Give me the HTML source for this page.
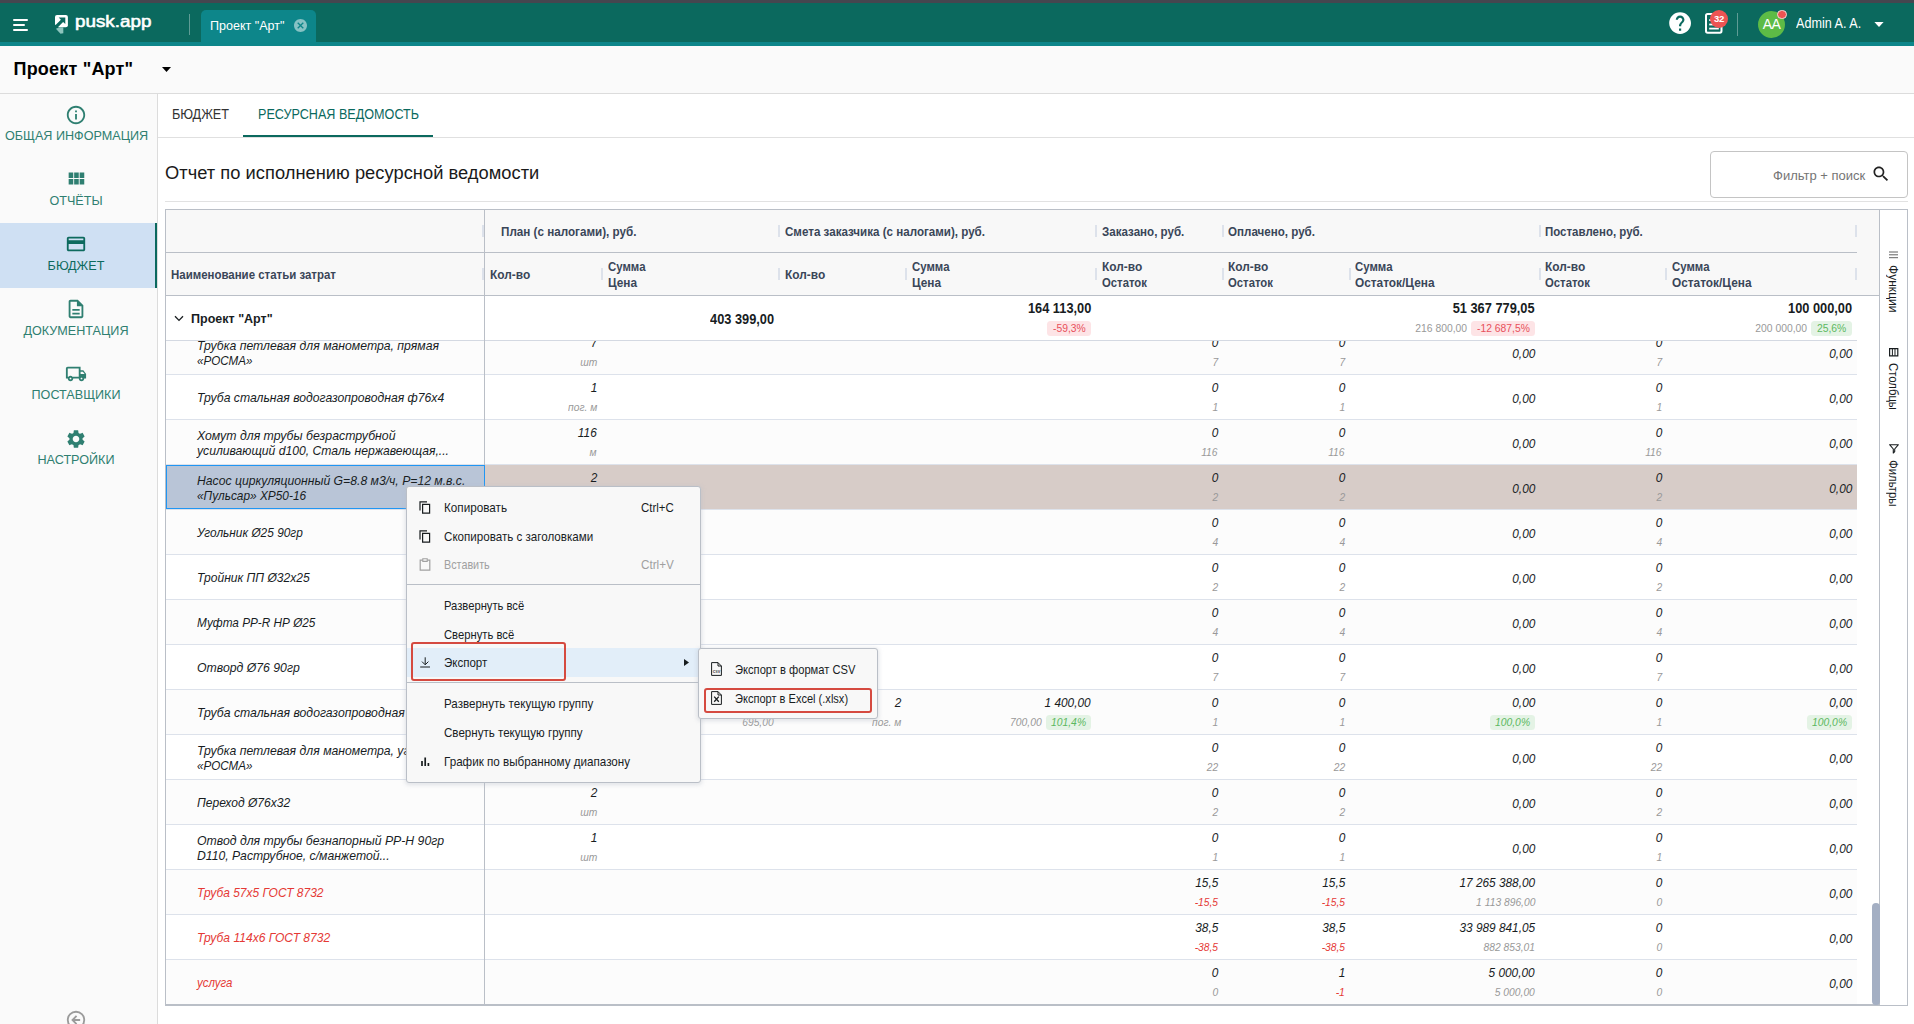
<!DOCTYPE html><html><head><meta charset="utf-8"><title>pusk.app</title><style>
*{box-sizing:border-box;margin:0;padding:0}
html,body{width:1914px;height:1024px;overflow:hidden;background:#fafafa;font-family:"Liberation Sans",sans-serif;color:#181d1f}
.a{position:absolute}
.t{position:absolute;white-space:nowrap;line-height:1}
svg{position:absolute;overflow:visible}
#topdark{left:0;top:0;width:1914px;height:3px;background:#45464f}
#topbar{left:0;top:3px;width:1914px;height:39px;background:#0b695e}
#topteal{left:0;top:42px;width:1914px;height:4px;background:#0d868a}
#tab{left:201px;top:10px;width:115px;height:33px;background:#0d868a;border-radius:5px 5px 0 0}
#titleline{left:0;top:93px;width:1914px;height:1px;background:#dcdcdc}
#sideline{left:157px;top:94px;width:1px;height:930px;background:#dcdcdc}
.sb{position:absolute;left:0;width:152px;text-align:center;font-size:13.5px;color:#2f7f71;line-height:1;white-space:nowrap;transform:scaleX(.934);transform-origin:50% 50%}
.hd{position:absolute;white-space:nowrap;font-weight:bold;font-size:13px;color:#3a4658;line-height:16px;transform:scaleX(.89);transform-origin:0 50%}
.sep{position:absolute;width:2px;height:12px;background:#dde2eb}
.row{position:absolute;left:166px;width:1691px;height:45px;border-bottom:1px solid #dde2eb;background:#fff}
.row.o{background:#fcfcfc}
.row.sel{background:#d7ccc8}
.c{position:absolute;white-space:nowrap;font-style:italic;font-size:13px;line-height:1;color:#181d1f;text-align:right;transform:scaleX(.91);transform-origin:100% 50%}
.g{position:absolute;white-space:nowrap;font-style:italic;font-size:11px;line-height:1;color:#999;text-align:right;transform:scaleX(.935);transform-origin:100% 50%}
.n{position:absolute;left:197px;white-space:nowrap;font-style:italic;font-size:13px;line-height:15px;color:#181d1f;transform:scaleX(.94);transform-origin:0 50%}
.red{color:#e53935}
.bdg{display:inline-block;padding:2px 5.4px;border-radius:3.5px;font-size:11px;line-height:11px;margin-left:4.3px;vertical-align:middle}
.bg{background:#e4f3e5;color:#4caf50}
.br{background:#fde4e6;color:#e25563}
.mi{position:absolute;white-space:nowrap;font-size:13px;line-height:1;color:#181d1f;transform:scaleX(.896);transform-origin:0 50%}
</style></head><body>
<div class="a" id="topdark"></div><div class="a" id="topbar"></div><div class="a" id="topteal"></div>
<div class="a" style="left:13px;top:18.5px;width:15px;height:2px;background:#fff;border-radius:1px"></div>
<div class="a" style="left:13px;top:23.5px;width:12px;height:2px;background:#fff;border-radius:1px"></div>
<div class="a" style="left:13px;top:28.5px;width:15px;height:2px;background:#fff;border-radius:1px"></div>
<svg style="left:55.1px;top:15.2px" width="13" height="19" viewBox="0 0 13 19">
<path d="M2 0H10.9a2 2 0 0 1 2 2V10.2a2 2 0 0 1-2 2H3.4L0 9.6V2a2 2 0 0 1 2-2z" fill="#fff"/>
<path d="M0.9 13.8L4.5 12.25H8.3V18.2L5.5 18.7z" fill="#8cc4bd"/>
<path d="M3.7 2.5H10.3V9.1L8.1 6.9 1.9 13.2 -0.4 10.9 5.9 4.7z" fill="#0b695e"/>
</svg>
<div class="t" style="left:75px;top:13.9px;font-size:15.6px;color:#fff;-webkit-text-stroke:0.55px #fff;transform:scaleX(1.2067);transform-origin:0 50%">pusk.app</div>
<div class="a" style="left:189px;top:14px;width:1px;height:21px;background:#5f9c95"></div>
<div class="a" id="tab"></div>
<div class="t" style="left:210px;top:18.5px;font-size:13.5px;color:#fff;transform:scaleX(.929);transform-origin:0 50%">Проект "Арт"</div>
<svg style="left:294px;top:19.2px" width="13" height="13" viewBox="2 2 20 20" ><path d="M12 2C6.47 2 2 6.47 2 12s4.47 10 10 10 10-4.47 10-10S17.53 2 12 2zm5 13.59L15.59 17 12 13.41 8.41 17 7 15.59 10.59 12 7 8.41 8.41 7 12 10.59 15.59 7 17 8.41 13.41 12 17 15.59z" fill="#86c2c4"/></svg>
<svg style="left:1667px;top:10.4px" width="26.2" height="26.2" viewBox="0 0 24 24" ><path d="M12 2C6.48 2 2 6.48 2 12s4.48 10 10 10 10-4.48 10-10S17.52 2 12 2zm1 17h-2v-2h2v2zm2.07-7.75l-.9.92C13.45 12.9 13 13.5 13 15h-2v-.5c0-1.1.45-2.1 1.17-2.83l1.24-1.26c.37-.36.59-.86.59-1.41 0-1.1-.9-2-2-2s-2 .9-2 2H8c0-2.21 1.79-4 4-4s4 1.79 4 4c0 .88-.36 1.68-.93 2.25z" fill="#fff"/></svg>
<svg style="left:1704.8px;top:13.2px" width="17.5" height="20.7" viewBox="0 0 17.5 20.7">
<rect x="1" y="1" width="15.5" height="18.7" rx="1.6" fill="none" stroke="#fff" stroke-width="2"/>
<rect x="4.2" y="6.2" width="9.6" height="1.8" fill="#fff"/><rect x="4.2" y="10.6" width="9.6" height="1.8" fill="#fff"/><rect x="4.2" y="14.7" width="9.6" height="1.8" fill="#fff"/>
</svg>
<div class="a" style="left:1710px;top:9.8px;width:18px;height:18px;border-radius:50%;background:#ec5453"></div>
<div class="t" style="left:1710px;top:14px;width:18px;text-align:center;font-size:9.5px;font-weight:bold;color:#fff;letter-spacing:-0.3px">32</div>
<div class="a" style="left:1737px;top:13px;width:1px;height:23px;background:#5f9c95"></div>
<div class="a" style="left:1758px;top:10.5px;width:27px;height:27px;border-radius:50%;background:#5dbb46"></div>
<div class="t" style="left:1758px;top:17px;width:27px;text-align:center;font-size:14px;color:#fff;letter-spacing:-0.5px">AA</div>
<div class="a" style="left:1777px;top:9.6px;width:9.6px;height:9.6px;border-radius:50%;background:#ec5453;border:1px solid #f4d9d6"></div>
<div class="t" style="left:1796px;top:16.1px;font-size:14px;color:#fff;transform:scaleX(.9);transform-origin:0 50%">Admin A. A.</div>
<svg style="left:1874.3px;top:21.8px" width="10" height="5.1" viewBox="0 0 10 5.5"><path d="M0 0h10L5 5.5z" fill="#fff"/></svg>
<div class="t" style="left:13.5px;top:59.5px;font-size:18px;font-weight:bold;color:#000;letter-spacing:0.2px">Проект "Арт"</div>
<svg style="left:161.5px;top:67.3px" width="9" height="5" viewBox="0 0 9 5"><path d="M0 0h9L4.5 5z" fill="#000"/></svg>
<div class="a" id="titleline"></div><div class="a" id="sideline"></div>
<div class="a" style="left:0;top:223px;width:157px;height:65px;background:#cfe0f3"></div>
<div class="a" style="left:155px;top:223px;width:2px;height:65px;background:#0b695e"></div>
<svg style="left:65px;top:104px" width="22" height="22" viewBox="0 0 24 24" ><path d="M11 17h2v-6h-2v6zm1-15C6.48 2 2 6.48 2 12s4.48 10 10 10 10-4.48 10-10S17.52 2 12 2zm0 18c-4.41 0-8-3.59-8-8s3.59-8 8-8 8 3.59 8 8-3.59 8-8 8zM11 9h2V7h-2v2z" fill="#2f7f71"/></svg>
<svg style="left:65px;top:168px" width="22" height="22" viewBox="0 0 24 24" ><path d="M4 11h5V5H4v6zm0 7h5v-6H4v6zm6 0h5v-6h-5v6zm6 0h5v-6h-5v6zm-6-7h5V5h-5v6zm6-6v6h5V5h-5z" fill="#2f7f71"/></svg>
<svg style="left:65px;top:233px" width="22" height="22" viewBox="0 0 24 24" ><path d="M20 4H4c-1.11 0-1.99.89-1.99 2L2 18c0 1.11.89 2 2 2h16c1.11 0 2-.89 2-2V6c0-1.11-.89-2-2-2zm0 14H4v-6h16v6zm0-10H4V6h16v2z" fill="#0d6a5e"/></svg>
<svg style="left:65px;top:298px" width="22" height="22" viewBox="0 0 24 24" ><path d="M8 16h8v2H8zm0-4h8v2H8zm6-10H6c-1.1 0-2 .9-2 2v16c0 1.1.89 2 1.99 2H18c1.1 0 2-.9 2-2V8l-6-6zm4 18H6V4h7v5h5v11z" fill="#2f7f71"/></svg>
<svg style="left:65px;top:363px" width="22" height="22" viewBox="0 0 24 24" ><path d="M20 8h-3V4H3c-1.1 0-2 .9-2 2v11h2c0 1.66 1.34 3 3 3s3-1.34 3-3h6c0 1.66 1.34 3 3 3s3-1.34 3-3h2v-5l-3-4zm-.5 1.5l1.96 2.5H17V9.5h2.5zM6 18c-.55 0-1-.45-1-1s.45-1 1-1 1 .45 1 1-.45 1-1 1zm2.22-3c-.55-.61-1.33-1-2.22-1s-1.67.39-2.22 1H3V6h12v9H8.22zM18 18c-.55 0-1-.45-1-1s.45-1 1-1 1 .45 1 1-.45 1-1 1z" fill="#2f7f71"/></svg>
<svg style="left:65px;top:427.7px" width="22" height="22" viewBox="0 0 24 24" ><path d="M19.14 12.94c.04-.3.06-.61.06-.94 0-.32-.02-.64-.07-.94l2.03-1.58c.18-.14.23-.41.12-.61l-1.92-3.32c-.12-.22-.37-.29-.59-.22l-2.39.96c-.5-.38-1.03-.7-1.62-.94l-.36-2.54c-.04-.24-.24-.41-.48-.41h-3.84c-.24 0-.43.17-.47.41l-.36 2.54c-.59.24-1.13.57-1.62.94l-2.39-.96c-.22-.08-.47 0-.59.22L2.74 8.87c-.12.21-.08.47.12.61l2.03 1.58c-.05.3-.09.63-.09.94s.02.64.07.94l-2.03 1.58c-.18.14-.23.41-.12.61l1.92 3.32c.12.22.37.29.59.22l2.39-.96c.5.38 1.03.7 1.62.94l.36 2.54c.05.24.24.41.48.41h3.84c.24 0 .44-.17.47-.41l.36-2.54c.59-.24 1.13-.56 1.62-.94l2.39.96c.22.08.47 0 .59-.22l1.92-3.32c.12-.22.07-.47-.12-.61l-2.01-1.58zM12 15.6c-1.98 0-3.6-1.62-3.6-3.6s1.62-3.6 3.6-3.6 3.6 1.62 3.6 3.6-1.62 3.6-3.6 3.6z" fill="#2f7f71"/></svg>
<div class="sb" style="top:128.8px">ОБЩАЯ ИНФОРМАЦИЯ</div>
<div class="sb" style="top:193.8px">ОТЧЁТЫ</div>
<div class="sb" style="top:258.8px;color:#0d6a5e">БЮДЖЕТ</div>
<div class="sb" style="top:323.8px">ДОКУМЕНТАЦИЯ</div>
<div class="sb" style="top:387.8px">ПОСТАВЩИКИ</div>
<div class="sb" style="top:452.8px">НАСТРОЙКИ</div>
<svg style="left:65px;top:1009.2px" width="22" height="22" viewBox="0 0 24 24"><circle cx="12" cy="12" r="9" fill="none" stroke="#9b9b9b" stroke-width="2"/><path d="M12.6 7.6L8.2 12l4.4 4.4M8.2 12h8.3" stroke="#9b9b9b" stroke-width="2" fill="none"/></svg>
<div class="a" style="left:158px;top:94px;width:1756px;height:930px;background:#fff"></div>
<div class="t" style="left:172px;top:106.8px;font-size:14px;color:#333;transform:scaleX(.905);transform-origin:0 50%">БЮДЖЕТ</div>
<div class="t" style="left:258px;top:106.8px;font-size:14px;color:#0b695e;transform:scaleX(.9);transform-origin:0 50%">РЕСУРСНАЯ ВЕДОМОСТЬ</div>
<div class="a" style="left:158px;top:137px;width:1756px;height:1px;background:#e0e0e0"></div>
<div class="a" style="left:243px;top:134.5px;width:190px;height:2.5px;background:#0b695e"></div>
<div class="t" style="left:165px;top:164px;font-size:18.3px;color:#1a1a1a;letter-spacing:0.03px">Отчет по исполнению ресурсной ведомости</div>
<div class="a" style="left:1710px;top:151px;width:198px;height:47px;border:1px solid #c4c4c4;border-radius:4px;background:#fff"></div>
<div class="t" style="left:1773px;top:168.5px;font-size:13px;color:#757575">Фильтр + поиск</div>
<svg style="left:1870.5px;top:163.5px" width="20" height="20" viewBox="0 0 24 24" ><path d="M15.5 14h-.79l-.28-.27C15.41 12.59 16 11.11 16 9.5 16 5.91 13.09 3 9.5 3S3 5.91 3 9.5 5.91 16 9.5 16c1.61 0 3.09-.59 4.23-1.57l.27.28v.79l5 4.99L20.49 19l-4.99-5zm-6 0C7.01 14 5 11.99 5 9.5S7.01 5 9.5 5 14 7.01 14 9.5 11.99 14 9.5 14z" fill="#222"/></svg>
<div class="a" style="left:165px;top:201px;width:1743px;height:1px;background:#e2e2e2"></div>
<div class="a" style="left:165px;top:209px;width:1743px;height:797px;border:1px solid #babfc7;background:#fff"></div>
<div class="a" style="left:166px;top:210px;width:1713px;height:86px;background:#f8f8f8;border-bottom:1px solid #babfc7"></div>
<div class="a" style="left:166px;top:252px;width:1691px;height:1px;background:#babfc7"></div>
<div class="a" style="left:1879px;top:210px;width:1px;height:795px;background:#babfc7"></div>
<div class="hd" style="left:501px;top:223.6px;transform:scaleX(0.8972)">План (с налогами), руб.</div>
<div class="hd" style="left:785px;top:223.6px;transform:scaleX(0.8918)">Смета заказчика (с налогами), руб.</div>
<div class="hd" style="left:1101.5px;top:223.6px;transform:scaleX(0.8902)">Заказано, руб.</div>
<div class="hd" style="left:1228px;top:223.6px;transform:scaleX(0.8917)">Оплачено, руб.</div>
<div class="hd" style="left:1545px;top:223.6px;transform:scaleX(0.8832)">Поставлено, руб.</div>
<div class="hd" style="left:171px;top:267px;transform:scaleX(0.8809)">Наименование статьи затрат</div>
<div class="hd" style="left:490px;top:267px;transform:scaleX(0.9157)">Кол-во</div>
<div class="hd" style="left:607.5px;top:259px;transform:scaleX(0.8774)">Сумма</div>
<div class="hd" style="left:607.5px;top:275px;transform:scaleX(0.9103)">Цена</div>
<div class="hd" style="left:784.7px;top:267px;transform:scaleX(0.9157)">Кол-во</div>
<div class="hd" style="left:911.5px;top:259px;transform:scaleX(0.8774)">Сумма</div>
<div class="hd" style="left:911.5px;top:275px;transform:scaleX(0.9103)">Цена</div>
<div class="hd" style="left:1101.5px;top:259px;transform:scaleX(0.9157)">Кол-во</div>
<div class="hd" style="left:1101.5px;top:275px;transform:scaleX(0.8705)">Остаток</div>
<div class="hd" style="left:1228px;top:259px;transform:scaleX(0.9157)">Кол-во</div>
<div class="hd" style="left:1228px;top:275px;transform:scaleX(0.8705)">Остаток</div>
<div class="hd" style="left:1355px;top:259px;transform:scaleX(0.8774)">Сумма</div>
<div class="hd" style="left:1355px;top:275px;transform:scaleX(0.9121)">Остаток/Цена</div>
<div class="hd" style="left:1545px;top:259px;transform:scaleX(0.9157)">Кол-во</div>
<div class="hd" style="left:1545px;top:275px;transform:scaleX(0.8705)">Остаток</div>
<div class="hd" style="left:1672px;top:259px;transform:scaleX(0.8774)">Сумма</div>
<div class="hd" style="left:1672px;top:275px;transform:scaleX(0.9121)">Остаток/Цена</div>
<div class="sep" style="left:482px;top:225px"></div>
<div class="sep" style="left:777.5px;top:225px"></div>
<div class="sep" style="left:1095px;top:225px"></div>
<div class="sep" style="left:1222px;top:225px"></div>
<div class="sep" style="left:1538.5px;top:225px"></div>
<div class="sep" style="left:1855px;top:225px"></div>
<div class="sep" style="left:482px;top:268px"></div>
<div class="sep" style="left:601px;top:268px"></div>
<div class="sep" style="left:777.5px;top:268px"></div>
<div class="sep" style="left:905px;top:268px"></div>
<div class="sep" style="left:1095px;top:268px"></div>
<div class="sep" style="left:1222px;top:268px"></div>
<div class="sep" style="left:1348.5px;top:268px"></div>
<div class="sep" style="left:1538.5px;top:268px"></div>
<div class="sep" style="left:1665px;top:268px"></div>
<div class="sep" style="left:1855px;top:268px"></div>
<div class="row o" style="top:330px"></div>
<div class="n" style="top:337.8px;transform:scaleX(0.9407)">Трубка петлевая для манометра, прямая</div>
<div class="n" style="top:352.8px;transform:scaleX(0.8954)">«РОСМА»</div>
<div class="c" style="right:1317px;top:335.95px">7</div>
<div class="g" style="right:1317px;top:356.63px">шт</div>
<div class="c" style="right:696px;top:335.95px">0</div>
<div class="g" style="right:696px;top:356.63px">7</div>
<div class="c" style="right:569px;top:335.95px">0</div>
<div class="g" style="right:569px;top:356.63px">7</div>
<div class="c" style="right:252px;top:335.95px">0</div>
<div class="g" style="right:252px;top:356.63px">7</div>
<div class="c" style="right:379px;top:346.65px">0,00</div>
<div class="c" style="right:62px;top:346.65px">0,00</div>
<div class="row" style="top:375px"></div>
<div class="n" style="top:390.3px;transform:scaleX(0.9377)">Труба стальная водогазопроводная ф76х4</div>
<div class="c" style="right:1317px;top:380.95px">1</div>
<div class="g" style="right:1317px;top:401.63px">пог. м</div>
<div class="c" style="right:696px;top:380.95px">0</div>
<div class="g" style="right:696px;top:401.63px">1</div>
<div class="c" style="right:569px;top:380.95px">0</div>
<div class="g" style="right:569px;top:401.63px">1</div>
<div class="c" style="right:252px;top:380.95px">0</div>
<div class="g" style="right:252px;top:401.63px">1</div>
<div class="c" style="right:379px;top:391.65px">0,00</div>
<div class="c" style="right:62px;top:391.65px">0,00</div>
<div class="row o" style="top:420px"></div>
<div class="n" style="top:427.8px;transform:scaleX(0.9464)">Хомут для трубы безраструбной</div>
<div class="n" style="top:442.8px;transform:scaleX(0.9351)">усиливающий d100, Сталь нержавеющая,...</div>
<div class="c" style="right:1317px;top:425.95px">116</div>
<div class="g" style="right:1317px;top:446.63px">м</div>
<div class="c" style="right:696px;top:425.95px">0</div>
<div class="g" style="right:696px;top:446.63px">116</div>
<div class="c" style="right:569px;top:425.95px">0</div>
<div class="g" style="right:569px;top:446.63px">116</div>
<div class="c" style="right:252px;top:425.95px">0</div>
<div class="g" style="right:252px;top:446.63px">116</div>
<div class="c" style="right:379px;top:436.65px">0,00</div>
<div class="c" style="right:62px;top:436.65px">0,00</div>
<div class="row sel" style="top:465px"></div>
<div class="a" style="left:166px;top:465px;width:319px;height:44px;background:#b9c5d7;border:1px solid #2196f3;z-index:2"></div>
<div class="n" style="top:472.8px;transform:scaleX(0.9375);z-index:3">Насос циркуляционный G=8.8 м3/ч, P=12 м.в.с.</div>
<div class="n" style="top:487.8px;transform:scaleX(0.9125);z-index:3">«Пульсар» XP50-16</div>
<div class="c" style="right:1317px;top:470.95px">2</div>
<div class="g" style="right:1317px;top:491.63px">шт</div>
<div class="c" style="right:696px;top:470.95px">0</div>
<div class="g" style="right:696px;top:491.63px">2</div>
<div class="c" style="right:569px;top:470.95px">0</div>
<div class="g" style="right:569px;top:491.63px">2</div>
<div class="c" style="right:252px;top:470.95px">0</div>
<div class="g" style="right:252px;top:491.63px">2</div>
<div class="c" style="right:379px;top:481.65px">0,00</div>
<div class="c" style="right:62px;top:481.65px">0,00</div>
<div class="row o" style="top:510px"></div>
<div class="n" style="top:525.3px;transform:scaleX(0.9135)">Угольник Ø25 90гр</div>
<div class="c" style="right:1317px;top:515.95px">4</div>
<div class="g" style="right:1317px;top:536.63px">шт</div>
<div class="c" style="right:696px;top:515.95px">0</div>
<div class="g" style="right:696px;top:536.63px">4</div>
<div class="c" style="right:569px;top:515.95px">0</div>
<div class="g" style="right:569px;top:536.63px">4</div>
<div class="c" style="right:252px;top:515.95px">0</div>
<div class="g" style="right:252px;top:536.63px">4</div>
<div class="c" style="right:379px;top:526.65px">0,00</div>
<div class="c" style="right:62px;top:526.65px">0,00</div>
<div class="row" style="top:555px"></div>
<div class="n" style="top:570.3px;transform:scaleX(0.9298)">Тройник ПП Ø32х25</div>
<div class="c" style="right:1317px;top:560.95px">2</div>
<div class="g" style="right:1317px;top:581.63px">шт</div>
<div class="c" style="right:696px;top:560.95px">0</div>
<div class="g" style="right:696px;top:581.63px">2</div>
<div class="c" style="right:569px;top:560.95px">0</div>
<div class="g" style="right:569px;top:581.63px">2</div>
<div class="c" style="right:252px;top:560.95px">0</div>
<div class="g" style="right:252px;top:581.63px">2</div>
<div class="c" style="right:379px;top:571.65px">0,00</div>
<div class="c" style="right:62px;top:571.65px">0,00</div>
<div class="row o" style="top:600px"></div>
<div class="n" style="top:615.3px;transform:scaleX(0.9054)">Муфта PP-R НР Ø25</div>
<div class="c" style="right:1317px;top:605.95px">4</div>
<div class="g" style="right:1317px;top:626.63px">шт</div>
<div class="c" style="right:696px;top:605.95px">0</div>
<div class="g" style="right:696px;top:626.63px">4</div>
<div class="c" style="right:569px;top:605.95px">0</div>
<div class="g" style="right:569px;top:626.63px">4</div>
<div class="c" style="right:252px;top:605.95px">0</div>
<div class="g" style="right:252px;top:626.63px">4</div>
<div class="c" style="right:379px;top:616.65px">0,00</div>
<div class="c" style="right:62px;top:616.65px">0,00</div>
<div class="row" style="top:645px"></div>
<div class="n" style="top:660.3px;transform:scaleX(0.9433)">Отворд Ø76 90гр</div>
<div class="c" style="right:1317px;top:650.95px">7</div>
<div class="g" style="right:1317px;top:671.63px">шт</div>
<div class="c" style="right:696px;top:650.95px">0</div>
<div class="g" style="right:696px;top:671.63px">7</div>
<div class="c" style="right:569px;top:650.95px">0</div>
<div class="g" style="right:569px;top:671.63px">7</div>
<div class="c" style="right:252px;top:650.95px">0</div>
<div class="g" style="right:252px;top:671.63px">7</div>
<div class="c" style="right:379px;top:661.65px">0,00</div>
<div class="c" style="right:62px;top:661.65px">0,00</div>
<div class="row o" style="top:690px"></div>
<div class="n" style="top:705.3px;transform:scaleX(0.94)">Труба стальная водогазопроводная ф57х3,5</div>
<div class="c" style="right:1317px;top:695.95px">1</div>
<div class="g" style="right:1317px;top:716.63px">пог. м</div>
<div class="c" style="right:696px;top:695.95px">0</div>
<div class="g" style="right:696px;top:716.63px">1</div>
<div class="c" style="right:569px;top:695.95px">0</div>
<div class="g" style="right:569px;top:716.63px">1</div>
<div class="c" style="right:252px;top:695.95px">0</div>
<div class="g" style="right:252px;top:716.63px">1</div>
<div class="g" style="right:1140px;top:716.63px">695,00</div>
<div class="c" style="right:1013px;top:695.95px">2</div>
<div class="g" style="right:1013px;top:716.63px">пог. м</div>
<div class="c" style="right:823px;top:695.95px">1 400,00</div>
<div class="a" style="left:1045.93px;top:715px;width:45.07px;height:15px;border-radius:3.5px;background:#e4f3e5"></div>
<div class="t" style="left:1051.03px;top:717.03px;font-size:11px;font-style:italic;color:#5cb860;transform:scaleX(0.94);transform-origin:0 50%">101,4%</div>
<div class="t" style="right:872.07px;top:717.03px;font-size:11px;font-style:italic;color:#999;transform:scaleX(0.94);transform-origin:100% 50%">700,00</div>
<div class="c" style="right:379px;top:695.95px">0,00</div>
<div class="a" style="left:1489.93px;top:715px;width:45.07px;height:15px;border-radius:3.5px;background:#e4f3e5"></div>
<div class="t" style="left:1495.03px;top:717.03px;font-size:11px;font-style:italic;color:#5cb860;transform:scaleX(0.94);transform-origin:0 50%">100,0%</div>
<div class="c" style="right:62px;top:695.95px">0,00</div>
<div class="a" style="left:1806.93px;top:715px;width:45.07px;height:15px;border-radius:3.5px;background:#e4f3e5"></div>
<div class="t" style="left:1812.03px;top:717.03px;font-size:11px;font-style:italic;color:#5cb860;transform:scaleX(0.94);transform-origin:0 50%">100,0%</div>
<div class="row" style="top:735px"></div>
<div class="n" style="top:742.8px;transform:scaleX(0.9407)">Трубка петлевая для манометра, угловая</div>
<div class="n" style="top:757.8px;transform:scaleX(0.8954)">«РОСМА»</div>
<div class="c" style="right:1317px;top:740.95px">22</div>
<div class="g" style="right:1317px;top:761.63px">шт</div>
<div class="c" style="right:696px;top:740.95px">0</div>
<div class="g" style="right:696px;top:761.63px">22</div>
<div class="c" style="right:569px;top:740.95px">0</div>
<div class="g" style="right:569px;top:761.63px">22</div>
<div class="c" style="right:252px;top:740.95px">0</div>
<div class="g" style="right:252px;top:761.63px">22</div>
<div class="c" style="right:379px;top:751.65px">0,00</div>
<div class="c" style="right:62px;top:751.65px">0,00</div>
<div class="row o" style="top:780px"></div>
<div class="n" style="top:795.3px;transform:scaleX(0.9278)">Переход Ø76х32</div>
<div class="c" style="right:1317px;top:785.95px">2</div>
<div class="g" style="right:1317px;top:806.63px">шт</div>
<div class="c" style="right:696px;top:785.95px">0</div>
<div class="g" style="right:696px;top:806.63px">2</div>
<div class="c" style="right:569px;top:785.95px">0</div>
<div class="g" style="right:569px;top:806.63px">2</div>
<div class="c" style="right:252px;top:785.95px">0</div>
<div class="g" style="right:252px;top:806.63px">2</div>
<div class="c" style="right:379px;top:796.65px">0,00</div>
<div class="c" style="right:62px;top:796.65px">0,00</div>
<div class="row" style="top:825px"></div>
<div class="n" style="top:832.8px;transform:scaleX(0.9434)">Отвод для трубы безнапорный PP-H 90гр</div>
<div class="n" style="top:847.8px;transform:scaleX(0.9369)">D110, Раструбное, с/манжетой...</div>
<div class="c" style="right:1317px;top:830.95px">1</div>
<div class="g" style="right:1317px;top:851.63px">шт</div>
<div class="c" style="right:696px;top:830.95px">0</div>
<div class="g" style="right:696px;top:851.63px">1</div>
<div class="c" style="right:569px;top:830.95px">0</div>
<div class="g" style="right:569px;top:851.63px">1</div>
<div class="c" style="right:252px;top:830.95px">0</div>
<div class="g" style="right:252px;top:851.63px">1</div>
<div class="c" style="right:379px;top:841.65px">0,00</div>
<div class="c" style="right:62px;top:841.65px">0,00</div>
<div class="row o" style="top:870px"></div>
<div class="n red" style="top:885.3px;transform:scaleX(0.9218)">Труба 57х5 ГОСТ 8732</div>
<div class="c" style="right:696px;top:875.95px">15,5</div>
<div class="g red" style="right:696px;top:896.63px">-15,5</div>
<div class="c" style="right:569px;top:875.95px">15,5</div>
<div class="g red" style="right:569px;top:896.63px">-15,5</div>
<div class="c" style="right:379px;top:875.95px">17 265 388,00</div>
<div class="g" style="right:379px;top:896.63px">1 113 896,00</div>
<div class="c" style="right:252px;top:875.95px">0</div>
<div class="g" style="right:252px;top:896.63px">0</div>
<div class="c" style="right:62px;top:886.65px">0,00</div>
<div class="row" style="top:915px"></div>
<div class="n red" style="top:930.3px;transform:scaleX(0.9282)">Труба 114х6 ГОСТ 8732</div>
<div class="c" style="right:696px;top:920.95px">38,5</div>
<div class="g red" style="right:696px;top:941.63px">-38,5</div>
<div class="c" style="right:569px;top:920.95px">38,5</div>
<div class="g red" style="right:569px;top:941.63px">-38,5</div>
<div class="c" style="right:379px;top:920.95px">33 989 841,05</div>
<div class="g" style="right:379px;top:941.63px">882 853,01</div>
<div class="c" style="right:252px;top:920.95px">0</div>
<div class="g" style="right:252px;top:941.63px">0</div>
<div class="c" style="right:62px;top:931.65px">0,00</div>
<div class="row o" style="top:960px"></div>
<div class="n red" style="top:975.3px;transform:scaleX(0.881)">услуга</div>
<div class="c" style="right:696px;top:965.95px">0</div>
<div class="g" style="right:696px;top:986.63px">0</div>
<div class="c" style="right:569px;top:965.95px">1</div>
<div class="g red" style="right:569px;top:986.63px">-1</div>
<div class="c" style="right:379px;top:965.95px">5 000,00</div>
<div class="g" style="right:379px;top:986.63px">5 000,00</div>
<div class="c" style="right:252px;top:965.95px">0</div>
<div class="g" style="right:252px;top:986.63px">0</div>
<div class="c" style="right:62px;top:976.65px">0,00</div>
<div class="a" style="left:166px;top:296px;width:1691px;height:45px;background:#fff;border-bottom:1px solid #d4d9e2"></div>
<svg style="left:173.5px;top:314.5px" width="10" height="7" viewBox="0 0 10 7"><path d="M1 1.2L5 5.4 9 1.2" fill="none" stroke="#181d1f" stroke-width="1.3"/></svg>
<div class="t" style="left:191px;top:311.5px;font-size:13px;font-weight:bold;color:#181d1f;transform:scaleX(.963);transform-origin:0 50%">Проект "Арт"</div>
<div class="t" style="right:1140px;top:312.16px;font-size:14px;font-weight:bold;color:#181d1f;transform:scaleX(.914);transform-origin:100% 50%">403 399,00</div>
<div class="t" style="right:823px;top:301.16px;font-size:14px;font-weight:bold;color:#181d1f;transform:scaleX(.914);transform-origin:100% 50%">164 113,00</div>
<div class="a" style="left:1046.84px;top:321px;width:44.16px;height:15px;border-radius:3.5px;background:#fde4e6"></div>
<div class="t" style="left:1052.64px;top:323.03px;font-size:11px;color:#e8505b;transform:scaleX(0.94);transform-origin:0 50%">-59,3%</div>
<div class="t" style="right:379px;top:301.16px;font-size:14px;font-weight:bold;color:#181d1f;transform:scaleX(.914);transform-origin:100% 50%">51 367 779,05</div>
<div class="a" style="left:1470.71px;top:321px;width:64.29px;height:15px;border-radius:3.5px;background:#fde4e6"></div>
<div class="t" style="left:1476.51px;top:323.03px;font-size:11px;color:#e8505b;transform:scaleX(0.94);transform-origin:0 50%">-12 687,5%</div>
<div class="t" style="right:447.29px;top:323.03px;font-size:11px;color:#999;transform:scaleX(0.94);transform-origin:100% 50%">216 800,00</div>
<div class="t" style="right:62px;top:301.16px;font-size:14px;font-weight:bold;color:#181d1f;transform:scaleX(.914);transform-origin:100% 50%">100 000,00</div>
<div class="a" style="left:1811.28px;top:321px;width:40.72px;height:15px;border-radius:3.5px;background:#e4f3e5"></div>
<div class="t" style="left:1817.08px;top:323.03px;font-size:11px;color:#5cb860;transform:scaleX(0.94);transform-origin:0 50%">25,6%</div>
<div class="t" style="right:106.72px;top:323.03px;font-size:11px;color:#999;transform:scaleX(0.94);transform-origin:100% 50%">200 000,00</div>
<div class="a" style="left:484px;top:210px;width:1px;height:795px;background:#babfc7"></div>
<div class="a" style="left:166px;top:1004px;width:1713px;height:1px;background:#babfc7"></div>
<div class="a" style="left:1872px;top:903px;width:7.5px;height:102px;border-radius:4px;background:#a4afc3"></div>
<div class="t" style="left:1887px;top:265.3px;font-size:12px;color:#181d1f;writing-mode:vertical-rl;line-height:12px;width:12px;transform:scaleY(1.0047);transform-origin:50% 0">Функции</div>
<div class="t" style="left:1887px;top:362.5px;font-size:12px;color:#181d1f;writing-mode:vertical-rl;line-height:12px;width:12px;transform:scaleY(0.9436);transform-origin:50% 0">Столбцы</div>
<div class="t" style="left:1887px;top:459.7px;font-size:12px;color:#181d1f;writing-mode:vertical-rl;line-height:12px;width:12px;transform:scaleY(0.9502);transform-origin:50% 0">Фильтры</div>
<svg style="left:1889px;top:250.5px" width="9" height="8" viewBox="0 0 9 8"><path d="M0 1h9M0 3.8h9M0 6.7h9" stroke="#3a3a3a" stroke-width="0.8" fill="none"/></svg>
<svg style="left:1888.8px;top:347.5px" width="9.4" height="8.4" viewBox="0 0 9.4 8.4"><path d="M0.6 0.6h8.2v7.2h-8.2z" stroke="#181d1f" stroke-width="1.2" fill="none"/><path d="M3.4 0.6v7.2M6 0.6v7.2" stroke="#181d1f" stroke-width="1" fill="none"/></svg>
<svg style="left:1888.8px;top:444.2px" width="10" height="10" viewBox="0 0 10 10"><path d="M0.6 0.7h8.8L5.7 5v2.6L4.3 9V5z" stroke="#181d1f" stroke-width="1.1" fill="none" stroke-linejoin="round"/></svg>
<div class="a" style="left:0;top:0;width:0;height:0;z-index:10">
<div class="a" style="left:406px;top:486px;width:295px;height:297px;background:#f8f8f8;border:1px solid #babfc7;border-radius:3px;box-shadow:0 1px 4px 1px rgba(186,191,199,.4)"></div>
<div class="a" style="left:407px;top:648px;width:293px;height:28.8px;background:#e2eef9"></div>
<div class="a" style="left:407px;top:584px;width:293px;height:1px;background:#babfc7"></div>
<div class="a" style="left:407px;top:682px;width:293px;height:1px;background:#babfc7"></div>
<div class="mi" style="left:443.7px;top:501.29px;color:#181d1f;transform:scaleX(0.9)">Копировать</div>
<div class="mi" style="left:443.7px;top:530.29px;color:#181d1f;transform:scaleX(0.8922)">Скопировать с заголовками</div>
<div class="mi" style="left:443.7px;top:558.29px;color:#a0a0a0;transform:scaleX(0.8293)">Вставить</div>
<div class="mi" style="left:443.7px;top:598.79px;color:#181d1f;transform:scaleX(0.8622)">Развернуть всё</div>
<div class="mi" style="left:443.7px;top:627.79px;color:#181d1f;transform:scaleX(0.8654)">Свернуть всё</div>
<div class="mi" style="left:443.7px;top:656.29px;color:#181d1f;transform:scaleX(0.8865)">Экспорт</div>
<div class="mi" style="left:443.7px;top:697.29px;color:#181d1f;transform:scaleX(0.8907)">Развернуть текущую группу</div>
<div class="mi" style="left:443.7px;top:726.29px;color:#181d1f;transform:scaleX(0.8907)">Свернуть текущую группу</div>
<div class="mi" style="left:443.7px;top:755.29px;color:#181d1f;transform:scaleX(0.8957)">График по выбранному диапазону</div>
<div class="mi" style="left:641px;top:501.29px;color:#181d1f;transform:scaleX(0.8818)">Ctrl+C</div>
<div class="mi" style="left:641px;top:558.29px;color:#a0a0a0;transform:scaleX(0.8991)">Ctrl+V</div>
<svg style="left:419px;top:501px" width="12" height="13" viewBox="0 0 12 13"><path d="M3.6 3.3h7v8.9h-7z" fill="none" stroke="#181d1f" stroke-width="1.2"/><path d="M1 9.5V0.8h7" fill="none" stroke="#181d1f" stroke-width="1.2"/></svg>
<svg style="left:419px;top:530px" width="12" height="13" viewBox="0 0 12 13"><path d="M3.6 3.3h7v8.9h-7z" fill="none" stroke="#181d1f" stroke-width="1.2"/><path d="M1 9.5V0.8h7" fill="none" stroke="#181d1f" stroke-width="1.2"/></svg>
<svg style="left:419px;top:558px" width="12" height="13" viewBox="0 0 12 13"><path d="M1.2 2.2h9.6v10h-9.6z" fill="none" stroke="#a0a0a0" stroke-width="1.2"/><path d="M3.8 0.8h4.4v2.6H3.8z" fill="#f8f8f8" stroke="#a0a0a0" stroke-width="1.1"/></svg>
<svg style="left:420px;top:656.6px" width="10" height="11" viewBox="0 0 10 11"><path d="M5.2 0.3v7.2M2 4.6L5.2 7.8l3.2-3.2M0.2 10h9.8" fill="none" stroke="#181d1f" stroke-width="1"/></svg>
<svg style="left:420.5px;top:757px" width="9" height="9" viewBox="0 0 9 9"><path d="M1 4v5M4.2 0.5v8.5M7.4 6v3" stroke="#181d1f" stroke-width="1.7" fill="none"/></svg>
<svg style="left:683.5px;top:658.5px" width="5" height="7" viewBox="0 0 5 7"><path d="M0 0l5 3.5L0 7z" fill="#181d1f"/></svg>
<div class="a" style="left:698px;top:648px;width:180px;height:70.5px;background:#f8f8f8;border:1px solid #babfc7;border-radius:3px;box-shadow:0 1px 4px 1px rgba(186,191,199,.4)"></div>
<div class="mi" style="left:735px;top:663.05px;transform:scaleX(.858)">Экспорт в формат CSV</div>
<div class="mi" style="left:735px;top:692.05px;transform:scaleX(.85)">Экспорт в Excel (.xlsx)</div>
<svg style="left:711px;top:662px" width="11" height="14" viewBox="0 0 11 14"><path d="M0.6 0.6h6.4l3.4 3.4v9.4H0.6z" fill="none" stroke="#181d1f" stroke-width="1"/><path d="M7 0.6v3.4h3.4" fill="none" stroke="#181d1f" stroke-width="1"/><text x="5.5" y="11" font-size="4.6" font-weight="bold" text-anchor="middle" fill="#555" font-family="Liberation Sans, sans-serif">csv</text></svg>
<svg style="left:711px;top:691.3px" width="11" height="14" viewBox="0 0 11 14"><path d="M0.6 0.6h6.4l3.4 3.4v9.4H0.6z" fill="none" stroke="#181d1f" stroke-width="1"/><path d="M7 0.6v3.4h3.4" fill="none" stroke="#181d1f" stroke-width="1"/><path d="M3.2 5.6l4.6 5.2M7.8 5.6l-4.6 5.2" fill="none" stroke="#181d1f" stroke-width="1.3"/></svg>
<div class="a" style="left:410.8px;top:642.4px;width:154.8px;height:39.1px;border:2.7px solid #d54a40;border-radius:3px"></div>
<div class="a" style="left:704.4px;top:688.2px;width:167.4px;height:25.3px;border:2.8px solid #d54a40;border-radius:3px"></div>
</div>
</body></html>
